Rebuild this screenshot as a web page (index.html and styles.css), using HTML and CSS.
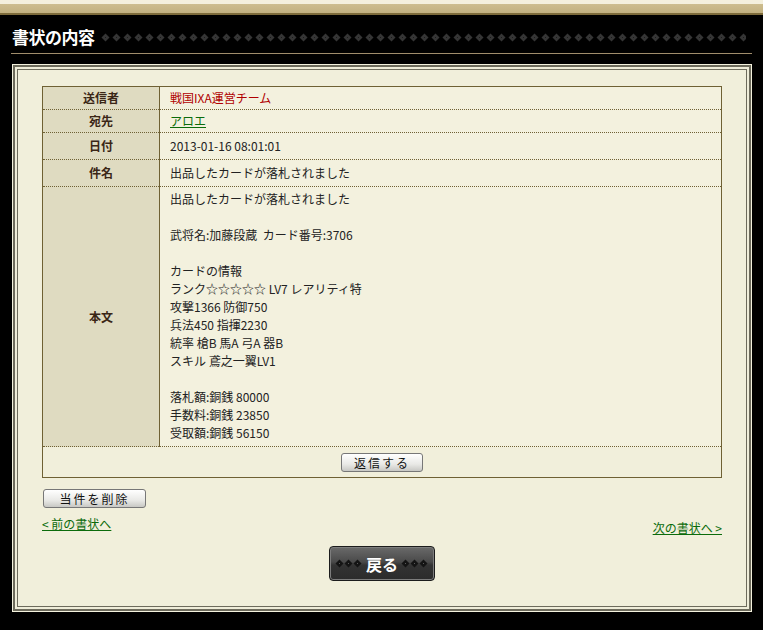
FILE: index.html
```html
<!DOCTYPE html>
<html lang="ja">
<head>
  <meta charset="UTF-8">
  <title>書状の内容</title>
  <link rel="stylesheet" href="styles.css">
</head>
<body>
  <div class="topband"></div>

  <div class="heading">
    <h2>書状の内容</h2>
    <svg class="dots" height="9">
      <defs>
        <pattern id="dia" width="11" height="9" patternUnits="userSpaceOnUse">
          <path d="M5.5 0.5 L7.5 2.5 L5.5 4.5 L3.5 2.5 Z M5.5 4.5 L7.5 6.5 L5.5 8.5 L3.5 6.5 Z M1.5 4.5 L3.5 2.5 L5.5 4.5 L3.5 6.5 Z M9.5 4.5 L7.5 2.5 L5.5 4.5 L7.5 6.5 Z" fill="#353535"/>
          <rect x="5" y="4" width="1" height="1" fill="#1a1a1a"/>
        </pattern>
      </defs>
      <rect width="100%" height="9" fill="url(#dia)"/>
    </svg>
  </div>
  <div class="rule"></div>

  <div class="frame">
    <table class="letter">
      <tr>
        <th>送信者</th>
        <td><span class="sender">戦国IXA運営チーム</span></td>
      </tr>
      <tr>
        <th>宛先</th>
        <td><a href="#">アロエ</a></td>
      </tr>
      <tr class="tall">
        <th>日付</th>
        <td>2013-01-16 08:01:01</td>
      </tr>
      <tr class="tall">
        <th>件名</th>
        <td>出品したカードが落札されました</td>
      </tr>
      <tr class="body-row">
        <th>本文</th>
        <td>出品したカードが落札されました<br>
          <br>
          武将名:加藤段蔵&nbsp;&nbsp;カード番号:3706<br>
          <br>
          カードの情報<br>
          ランク☆☆☆☆☆ LV7 レアリティ特<br>
          攻撃1366 防御750<br>
          兵法450 指揮2230<br>
          統率 槍B 馬A 弓A 器B<br>
          スキル 鳶之一翼LV1<br>
          <br>
          落札額:銅銭 80000<br>
          手数料:銅銭 23850<br>
          受取額:銅銭 56150</td>
      </tr>
      <tr class="reply-row">
        <td colspan="2"><button class="btn reply">返信する</button></td>
      </tr>
    </table>

    <button class="btn delete">当件を削除</button>

    <div class="pager">
      <a href="#">&lt; 前の書状へ</a>
      <a href="#" class="next">次の書状へ &gt;</a>
    </div>

    <div class="back-wrap">
      <button class="back">
        <svg width="28" height="9" viewBox="0 0 28 9">
          <g fill="#141414">
            <path d="M4.5 0.5 L8.5 4.5 L4.5 8.5 L0.5 4.5 Z"/>
            <path d="M13.5 0.5 L17.5 4.5 L13.5 8.5 L9.5 4.5 Z"/>
            <path d="M22.5 0.5 L26.5 4.5 L22.5 8.5 L18.5 4.5 Z"/>
          </g>
          <g fill="#5a5a5a">
            <rect x="4" y="4" width="1" height="1"/>
            <rect x="13" y="4" width="1" height="1"/>
            <rect x="22" y="4" width="1" height="1"/>
          </g>
        </svg>
        <span>戻る</span>
        <svg width="28" height="9" viewBox="0 0 28 9">
          <g fill="#141414">
            <path d="M4.5 0.5 L8.5 4.5 L4.5 8.5 L0.5 4.5 Z"/>
            <path d="M13.5 0.5 L17.5 4.5 L13.5 8.5 L9.5 4.5 Z"/>
            <path d="M22.5 0.5 L26.5 4.5 L22.5 8.5 L18.5 4.5 Z"/>
          </g>
          <g fill="#5a5a5a">
            <rect x="4" y="4" width="1" height="1"/>
            <rect x="13" y="4" width="1" height="1"/>
            <rect x="22" y="4" width="1" height="1"/>
          </g>
        </svg>
      </button>
    </div>
  </div>
</body>
</html>
```

FILE: styles.css
```css
body {
  margin: 0;
  background: #000;
  font-family: "Noto Sans CJK JP", sans-serif;
  font-size: 12px;
  color: #222;
}
.topband {
  height: 15px;
  background: linear-gradient(#f4f0dd 0, #f4f0dd 4px, #cdbd8f 4px, #c2b180 13px, #7d6b3b 13px, #7d6b3b 15px);
}
.heading {
  display: flex;
  align-items: center;
  height: 34px;
  padding: 4px 0 0 12px;
}
.heading h2 {
  margin: 0;
  color: #fff;
  font-size: 17px;
  font-weight: bold;
  letter-spacing: -0.5px;
  font-family: "Noto Sans CJK JP", serif;
}
.dots {
  flex: 1;
  margin: 2px 17px 0 5px;
}
.rule {
  margin: 0 11px 0 11px;
  border-top: 1px solid #a08d6c;
}
.frame {
  margin: 10px 11px 0 12px;
  background: #f1efdb;
  border: 1px solid #f4f2de;
  box-shadow: inset 0 0 0 2px #6d6b5c, inset 0 0 0 4px #efedd9, inset 0 0 0 5px #6d6b5c;
  padding: 21px 29px 30px 29px;
}
.letter {
  width: 100%;
  border-collapse: collapse;
  border: 1px solid #6f6134;
}
.letter th {
  width: 116px;
  background: #dfdbc1;
  color: #3a2616;
  font-weight: bold;
  text-align: center;
  border-right: 1px solid #6f6134;
  border-bottom: 1px dotted #6f6134;
  padding: 4px 0;
  line-height: 14px;
}
.letter td {
  background: #f3f1de;
  border-bottom: 1px dotted #6f6134;
  padding: 4px 10px;
  line-height: 14px;
  text-align: left;
}
.letter .tall th,
.letter .tall td {
  padding: 6px 10px;
}
.letter .tall th {
  padding: 6px 0;
}
.letter .body-row td {
  padding: 3px 10px 4px;
  line-height: 18px;
}
.letter .reply-row td {
  text-align: center;
  border-bottom: none;
  padding: 6px 0 5px;
  background: #f1efdb;
}
.sender {
  color: #b00000;
}
.letter a {
  color: #0b6b0b;
}
.btn {
  font-family: "Noto Sans CJK JP", sans-serif;
  font-size: 12px;
  height: 19px;
  line-height: 15px;
  padding: 0;
  border: 1px solid #777;
  border-radius: 3px;
  background: linear-gradient(#ffffff, #e9e9e6 60%, #c8c8c4);
  color: #111;
  letter-spacing: 2px;
}
.reply {
  width: 82px;
}
.delete {
  display: block;
  width: 103px;
  margin: 11px 0 0 1px;
}
.pager {
  display: flex;
  justify-content: space-between;
  margin-top: 9px;
}
.pager a {
  color: #0b6b0b;
  line-height: 14px;
}
.pager .next {
  margin-top: 4px;
}
.back-wrap {
  text-align: center;
  margin-top: 11px;
}
.back {
  display: inline-flex;
  align-items: center;
  justify-content: center;
  gap: 3px;
  width: 106px;
  height: 35px;
  padding: 0;
  border: 1px solid #1c1c1c;
  border-radius: 4px;
  background: linear-gradient(#6a6a6a, #4a4a4a 45%, #333 55%, #2c2c2c);
  box-shadow: inset 0 0 0 1px #7d7d7d;
  color: #fff;
  font-family: "Noto Sans CJK JP", serif;
  font-size: 16px;
  font-weight: bold;
}
```
